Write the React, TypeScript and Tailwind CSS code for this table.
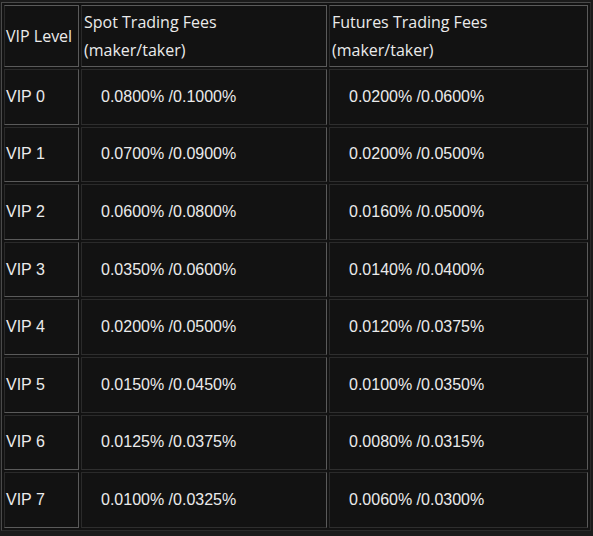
import React from 'react';

interface FeeRow {
  level: string;
  spot: string;
  futures: string;
}

const ROWS: FeeRow[] = [
  { level: 'VIP 0', spot: '0.0800% /0.1000%', futures: '0.0200% /0.0600%' },
  { level: 'VIP 1', spot: '0.0700% /0.0900%', futures: '0.0200% /0.0500%' },
  { level: 'VIP 2', spot: '0.0600% /0.0800%', futures: '0.0160% /0.0500%' },
  { level: 'VIP 3', spot: '0.0350% /0.0600%', futures: '0.0140% /0.0400%' },
  { level: 'VIP 4', spot: '0.0200% /0.0500%', futures: '0.0120% /0.0375%' },
  { level: 'VIP 5', spot: '0.0150% /0.0450%', futures: '0.0100% /0.0350%' },
  { level: 'VIP 6', spot: '0.0125% /0.0375%', futures: '0.0080% /0.0315%' },
  { level: 'VIP 7', spot: '0.0100% /0.0325%', futures: '0.0060% /0.0300%' },
];

export default function App() {
  return (
    <div className="w-[593px] h-[536px] bg-[#1b1b1b] pt-[2px] pl-[1px] overflow-hidden">
      <table className="table-fixed w-[590px] border-separate border-spacing-[2px] border border-t-[#4a4a4a] border-l-[#4a4a4a] border-b-[#2a2a2a] border-r-[#2a2a2a] bg-[#121212] text-[#ebebeb]">
        <thead>
          {/* Header */}
          <tr className="h-[62px] font-['Open_Sans',sans-serif] text-[16px] leading-[28px]">
            <th className="w-[75px] p-0 pl-[1px] text-left font-normal align-middle border border-t-[#5a5a5a] border-l-[#2a2a2a] border-b-[#5a5a5a] border-r-[#5a5a5a] whitespace-nowrap">
              VIP Level
            </th>
            <th className="w-[246px] p-0 pl-[2px] text-left font-normal align-middle border border-t-[#5a5a5a] border-l-[#2a2a2a] border-b-[#5a5a5a] border-r-[#5a5a5a]">
              Spot Trading Fees
              <br />
              (maker/taker)
            </th>
            <th className="w-[259px] p-0 pl-[2px] text-left font-normal align-middle border border-t-[#5a5a5a] border-l-[#2a2a2a] border-b-[#5a5a5a] border-r-[#5a5a5a]">
              Futures Trading Fees
              <br />
              (maker/taker)
            </th>
          </tr>
        </thead>
        <tbody className="font-['Liberation_Sans',Arial,sans-serif] text-[16px]">
          {ROWS.map((row) => (
            <tr key={row.level} className="h-[55.6px]">
              <td className="p-0 pl-[1px] align-middle border border-t-[#2a2a2a] border-l-[#2a2a2a] border-b-[#5a5a5a] border-r-[#5a5a5a]">
                {row.level}
              </td>
              <td className="p-0 pl-[19px] align-middle border border-t-[#2a2a2a] border-l-[#2a2a2a] border-b-[#2e2e2e] border-r-[#5a5a5a]">
                {row.spot}
              </td>
              <td className="p-0 pl-[19px] align-middle border border-t-[#2a2a2a] border-l-[#2a2a2a] border-b-[#2e2e2e] border-r-[#5a5a5a]">
                {row.futures}
              </td>
            </tr>
          ))}
        </tbody>
      </table>
    </div>
  );
}
